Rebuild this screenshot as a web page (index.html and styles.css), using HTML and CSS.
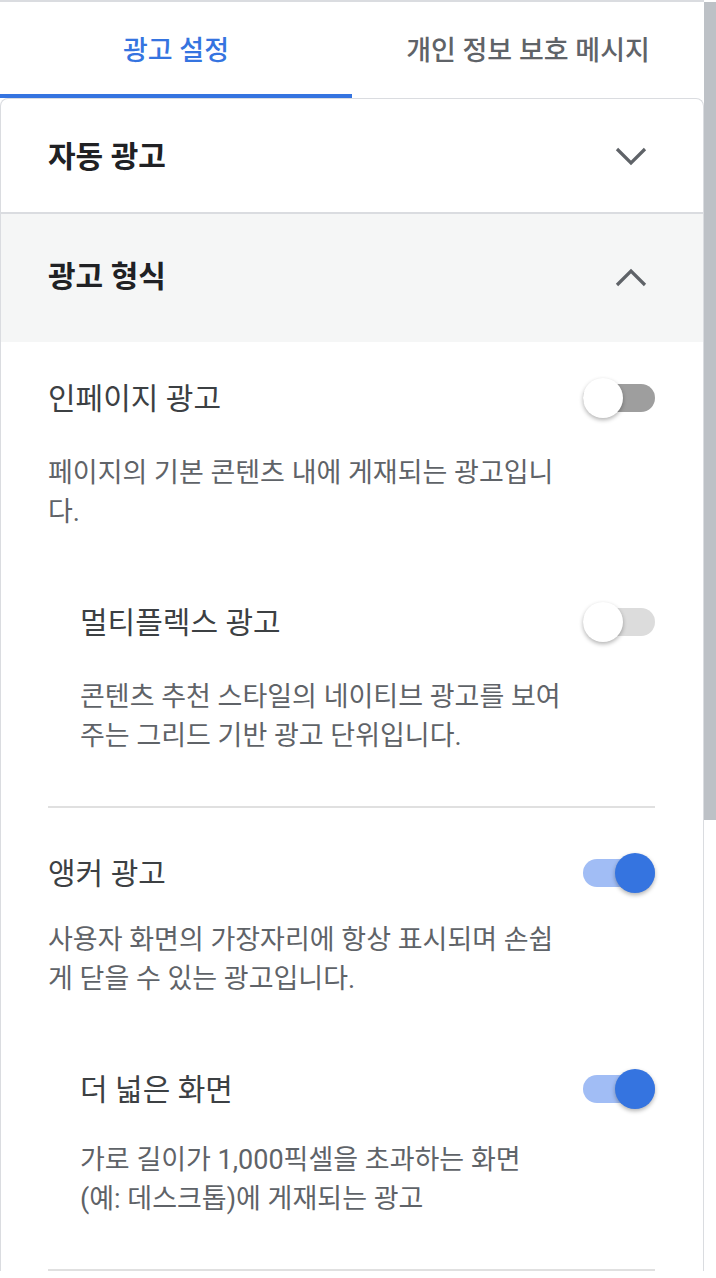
FILE: index.html
```html
<!DOCTYPE html>
<html lang="ko">
<head>
    <meta charset="UTF-8">
    <meta name="viewport" content="width=device-width, initial-scale=1.0">
    <title>광고 설정</title>
    <link rel="stylesheet" href="styles.css">
</head>
<body>
    <div class="page">
        <nav class="tabs">
            <div class="tab active">광고 설정</div>
            <div class="tab">개인 정보 보호 메시지</div>
        </nav>

        <div class="card">
            <div class="section-header">
                <span>자동 광고</span>
                <svg class="chevron" width="32" height="20" viewBox="0 0 32 20">
                    <path d="M2 3 L16 17 L30 3" fill="none" stroke="#5f6368" stroke-width="3.2"/>
                </svg>
            </div>

            <div class="section-header open">
                <span>광고 형식</span>
                <svg class="chevron" width="32" height="20" viewBox="0 0 32 20">
                    <path d="M2 17 L16 3 L30 17" fill="none" stroke="#5f6368" stroke-width="3.2"/>
                </svg>
            </div>

            <div class="section-body">
                <div class="setting">
                    <div class="setting-row">
                        <div class="setting-title">인페이지 광고</div>
                        <div class="toggle"><span class="knob"></span></div>
                    </div>
                    <p class="setting-desc">페이지의 기본 콘텐츠 내에 게재되는 광고입니다.</p>
                </div>

                <div class="setting sub">
                    <div class="setting-row">
                        <div class="setting-title">멀티플렉스 광고</div>
                        <div class="toggle disabled"><span class="knob"></span></div>
                    </div>
                    <p class="setting-desc">콘텐츠 추천 스타일의 네이티브 광고를 보여주는 그리드 기반 광고 단위입니다.</p>
                </div>

                <hr class="divider">

                <div class="setting tight">
                    <div class="setting-row">
                        <div class="setting-title">앵커 광고</div>
                        <div class="toggle on"><span class="knob"></span></div>
                    </div>
                    <p class="setting-desc">사용자 화면의 가장자리에 항상 표시되며 손쉽게 닫을 수 있는 광고입니다.</p>
                </div>

                <div class="setting sub wide">
                    <div class="setting-row">
                        <div class="setting-title">더 넓은 화면</div>
                        <div class="toggle on"><span class="knob"></span></div>
                    </div>
                    <p class="setting-desc">가로 길이가 1,000픽셀을 초과하는 화면 (예: 데스크톱)에 게재되는 광고</p>
                </div>

                <hr class="divider">
            </div>
        </div>
    </div>

    <div class="scroll-thumb"></div>
</body>
</html>
```

FILE: styles.css
```css
body {
    margin: 0;
    background: #fff;
    font-family: Roboto, "Noto Sans CJK KR", sans-serif;
    color: #3c4043;
    overflow: hidden;
}
.page {
    width: 704px;
    border-top: 2px solid #dadce0;
}
.tabs {
    display: flex;
    height: 96px;
}
.tab {
    flex: 1;
    display: flex;
    align-items: center;
    justify-content: center;
    font-size: 27px;
    font-weight: 500;
    color: #5f6368;
    border-bottom: 4px solid transparent;
    box-sizing: border-box;
}
.tab.active {
    color: #3574e0;
    border-bottom-color: #3574e0;
}
.card {
    border: 1px solid #dadce0;
    border-bottom: none;
    border-radius: 8px 8px 0 0;
}
.section-header {
    display: flex;
    align-items: center;
    justify-content: space-between;
    height: 113px;
    padding: 0 56px 0 47px;
    font-size: 30px;
    font-weight: 700;
    color: #202124;
}
.section-header span {
    margin-top: -3px;
}
.section-header.open {
    height: 128px;
    border-top: 2px solid #dadce0;
    background: #f5f6f6;
}
.section-header.open span {
    margin-top: -9px;
}
.chevron {
    display: block;
}
.section-body {
    padding: 36px 48px 0 47px;
}
.setting-row {
    display: flex;
    align-items: center;
    justify-content: space-between;
    height: 40px;
}
.setting-title {
    font-size: 30px;
    margin-bottom: 5px;
}
.setting-desc {
    margin: 36px 0 0;
    width: 512px;
    font-size: 27px;
    line-height: 39px;
    color: #5f6368;
}
.setting.tight .setting-desc {
    margin-top: 28px;
}
.setting.sub {
    margin-top: 70px;
    padding-left: 32px;
}
.setting.sub .setting-desc {
    width: 496px;
}
.setting.sub.wide .setting-desc {
    margin-top: 32px;
    width: 480px;
}
.divider {
    border: none;
    border-top: 2px solid #e0e0e0;
    margin: 50px 0 45px;
}
.toggle {
    position: relative;
    width: 72px;
    height: 28px;
    border-radius: 14px;
    background: #9e9e9e;
}
.toggle.disabled {
    background: #dcdcdc;
}
.toggle.on {
    background: #a1bdf5;
}
.knob {
    position: absolute;
    top: -6px;
    left: 0;
    width: 40px;
    height: 40px;
    border-radius: 50%;
    background: #fff;
    box-shadow: 0 2px 4px rgba(0, 0, 0, 0.3);
}
.toggle.on .knob {
    left: 32px;
    background: #3574e0;
}
.scroll-thumb {
    position: fixed;
    top: 2px;
    right: 0;
    width: 12px;
    height: 818px;
    background: #bdc1c6;
}
```
